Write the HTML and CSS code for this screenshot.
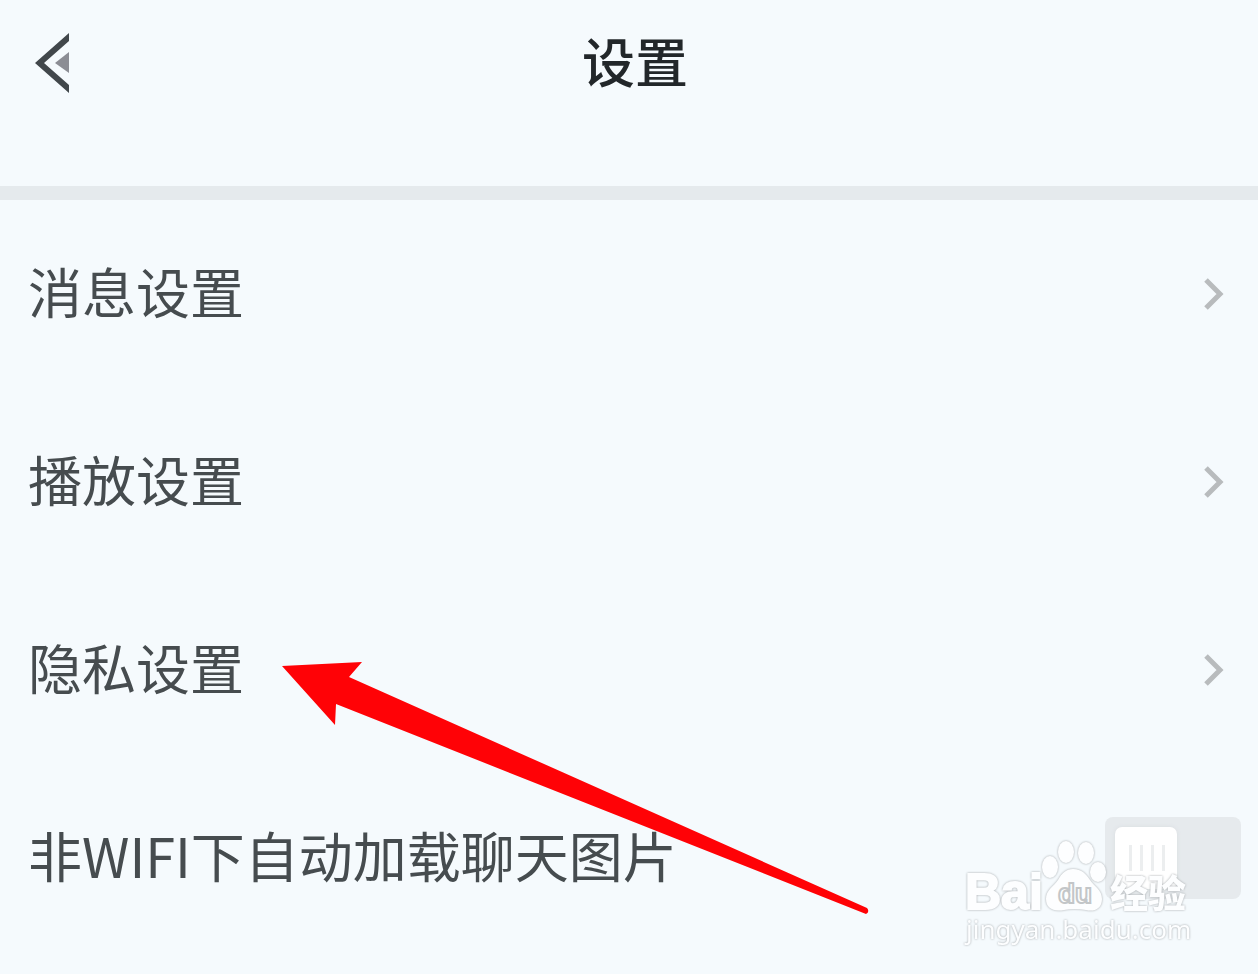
FILE: index.html
```html
<!DOCTYPE html>
<html lang="zh-CN">
<head>
<meta charset="utf-8">
<meta name="viewport" content="width=device-width, initial-scale=1">
<title>设置</title>
<link rel="stylesheet" href="styles.css">
</head>
<body>
<header class="header">
  <button class="back" type="button" aria-label="返回">
    <svg class="back-icon" viewBox="0 0 34 62">
      <path d="M34 1V9L9 31L34 53V61L0 31Z" fill="#41474b"/>
      <path d="M34 20V41L20 31Z" fill="#8b8d94"/>
    </svg>
  </button>
  <h1 class="title">设置</h1>
</header>
<main class="list">
  <a class="row" href="#message">
    <span class="label">消息设置</span>
    <svg class="chevron" viewBox="0 0 20 32"><path d="M2 2L16 16L2 30"/></svg>
  </a>
  <a class="row" href="#playback">
    <span class="label">播放设置</span>
    <svg class="chevron" viewBox="0 0 20 32"><path d="M2 2L16 16L2 30"/></svg>
  </a>
  <a class="row" href="#privacy">
    <span class="label">隐私设置</span>
    <svg class="chevron" viewBox="0 0 20 32"><path d="M2 2L16 16L2 30"/></svg>
  </a>
  <div class="row row-switch">
    <label class="label" for="autoload">非WIFI下自动加载聊天图片</label>
    <input class="switch" id="autoload" type="checkbox">
  </div>
  <svg class="arrow" viewBox="0 0 588 256" aria-hidden="true">
    <path d="M0 5L80 1L67 16L585 247Q588 251 584 253L54 43L53 64Z" fill="#ff0206"/>
  </svg>
  <svg class="watermark" viewBox="0 0 232 116" aria-hidden="true">
    <g class="mark">
      <text class="mark-latin" x="3" y="73">Bai</text>
      <ellipse cx="88" cy="31" rx="8" ry="11"/>
      <ellipse cx="104" cy="16" rx="8" ry="11"/>
      <ellipse cx="124" cy="17" rx="8" ry="11"/>
      <ellipse cx="136" cy="36" rx="8" ry="10"/>
      <path d="M111 33C120 33 124 38 128 44C133 51 140 54 140 63C140 73 132 76 124 74Q112 72 102 74C91 76 84 72 84 63C84 54 91 51 96 44C100 37 104 33 111 33Z"/>
      <text class="mark-han" x="148" y="71">经验</text>
      <text class="mark-url" x="4" y="103">jingyan.baidu.com</text>
    </g>
    <text class="mark-du" x="96" y="67">du</text>
  </svg>
</main>
</body>
</html>
```
FILE: styles.css
```css
* {
  box-sizing: border-box;
}

body {
  margin: 0;
  min-height: 100vh;
  background: #f5fafd;
  color: #464c4f;
  font-family: "Noto Sans CJK SC", sans-serif;
}

.header {
  display: grid;
  grid-template-columns: 80px 1fr 68px;
  align-items: center;
  height: 200px;
  padding-bottom: 60px;
  border-bottom: 14px solid #e5eaed;
}

.back {
  display: flex;
  width: 80px;
  padding: 0 0 0 35px;
  border: 0;
  background: none;
}

.back-icon {
  width: 34px;
  height: 62px;
}

.title {
  margin: 0;
  padding-bottom: 6px;
  color: #22272a;
  font-size: 53px;
  font-weight: 500;
  line-height: 80px;
  text-align: center;
}

.list {
  position: relative;
}

.row {
  display: flex;
  align-items: center;
  justify-content: space-between;
  height: 188px;
  padding: 0 34px 0 28px;
  color: inherit;
  font-size: 54px;
  line-height: 80px;
  text-decoration: none;
  white-space: nowrap;
}

.row-switch {
  padding-right: 17px;
}

.label {
  padding-bottom: 6px;
}

.chevron {
  flex: none;
  width: 20px;
  height: 32px;
  fill: none;
  stroke: #b8bbbd;
  stroke-width: 5;
}

.switch {
  flex: none;
  width: 136px;
  height: 82px;
  margin: 0;
  padding: 10px;
  border-radius: 8px;
  background: #e6eaed;
  appearance: none;
}

.switch::before {
  content: "";
  display: block;
  width: 62px;
  height: 62px;
  border-radius: 7px;
  background:
    repeating-linear-gradient(90deg, #eceeef 0 3px, transparent 3px 11px) 14px 18px / 36px 26px no-repeat,
    #fff;
  box-shadow: 0 0 4px #d9dde0;
}

.switch:checked::before {
  margin-left: auto;
}

.arrow {
  position: absolute;
  top: 461px;
  left: 282px;
  width: 588px;
  height: 256px;
  pointer-events: none;
}

.watermark {
  position: absolute;
  right: 64px;
  bottom: 0;
  width: 232px;
  height: 116px;
  pointer-events: none;
}

.mark {
  fill: #fdfeff;
  filter: drop-shadow(0 0 1px #a4a8ab);
}

.mark-latin {
  font: bold 50px "Liberation Sans", sans-serif;
  stroke: #fdfeff;
  stroke-width: 2;
}

.mark-du {
  fill: #fdfeff;
  font: bold 28px "Liberation Sans", sans-serif;
  stroke: #c3c6c8;
  stroke-width: 2;
}

.mark-han {
  font: 900 38px "Noto Sans CJK SC", sans-serif;
}

.mark-url {
  font: 26px "Noto Sans", sans-serif;
}
```
